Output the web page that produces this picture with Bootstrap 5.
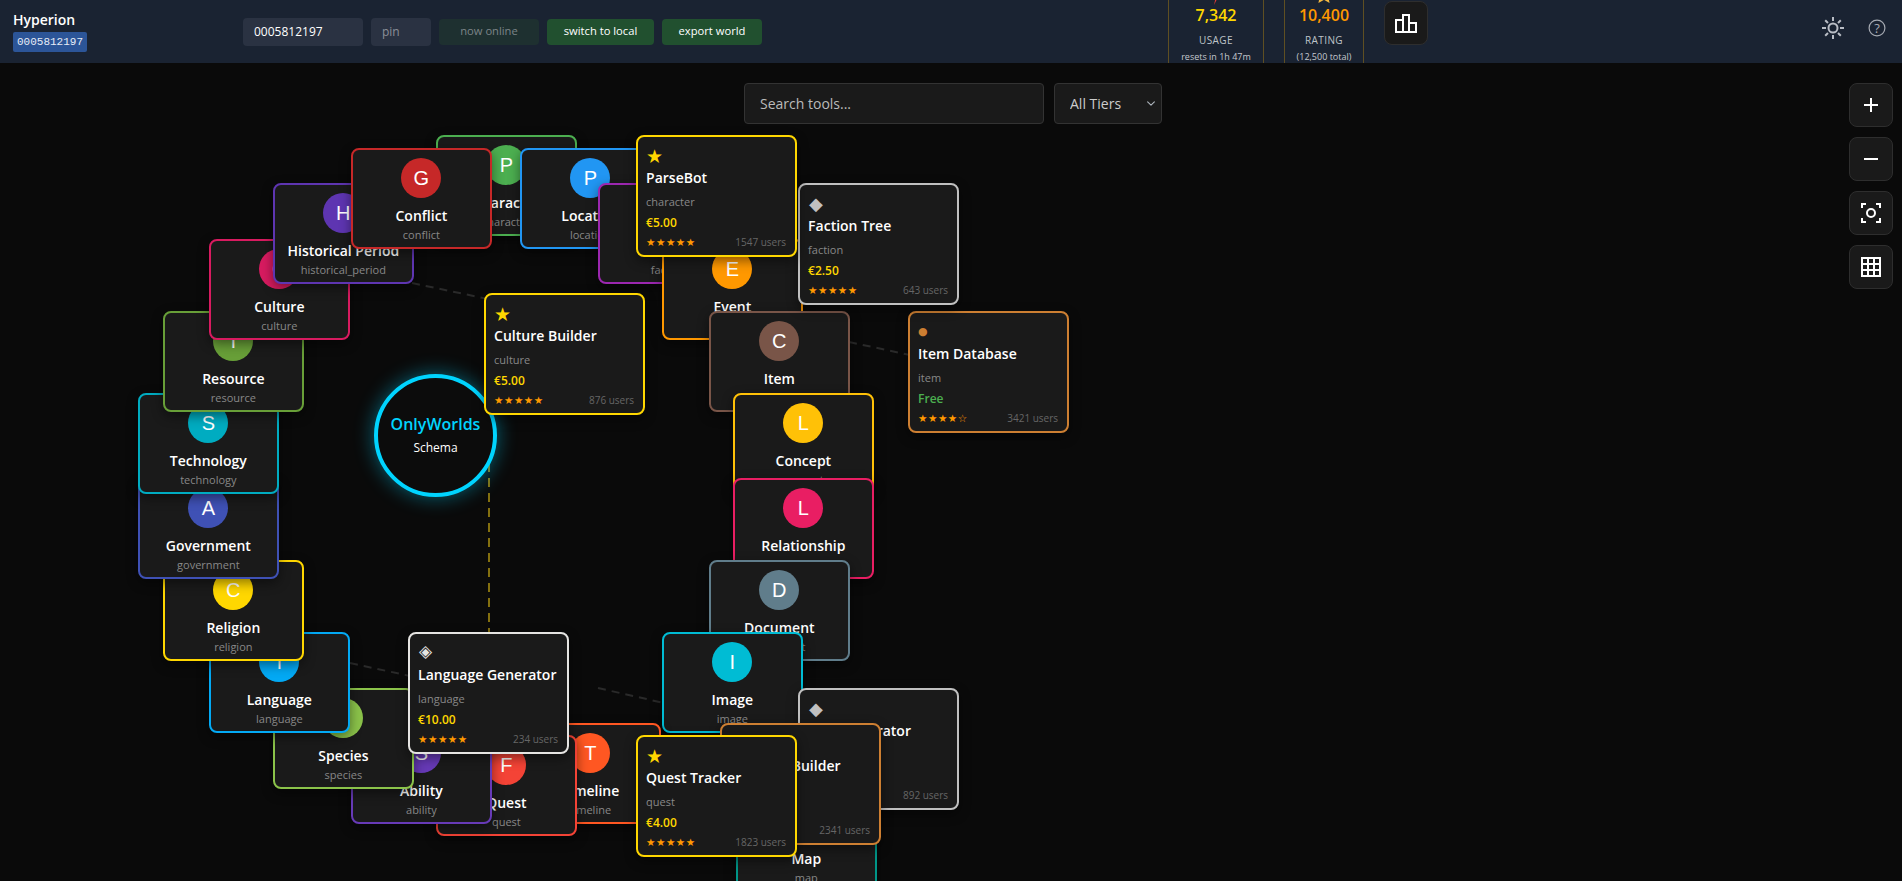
<!doctype html>
<html lang="en" data-bs-theme="dark">

<head>
	<meta charset="utf-8">
	<meta name="viewport" content="width=device-width, initial-scale=1">
	<title>Hyperion — OnlyWorlds tools</title>
	<link href="https://cdn.jsdelivr.net/npm/bootstrap@5.3.5/dist/css/bootstrap.min.css" rel="stylesheet"
		crossorigin="anonymous">
	<style>
		html, body { height: 100%; overflow: hidden; }
		body { background: #0a0a0a; color: #fff; font-family: "Open Sans", sans-serif; }

		.top-bar { height: 63px; background: #1a2332; overflow: hidden; }
		.brand-box { width: 243px; padding-left: 13px; }
		.brand-name { font-size: 14px; font-weight: 600; line-height: 19px; margin-top: -1px; }
		.world-tag { display: block; width: 74px; height: 20px; margin-top: 3px; padding: 0; background: #2c5598; border-radius: 2px; color: #e6ecf7; font: 11px/20px "Liberation Mono", monospace; text-align: center; }
		.bar-input { height: 28px; background: #2a3242; border: 0; border-radius: 4px; color: #fff; font-size: 12px; padding: 0 11px; }
		.bar-input::placeholder { color: #8a8f98; }
		.bar-btn { height: 26px; padding: 0; border: 0; border-radius: 4px; background: #21502f; color: #fff; font-size: 11.200px; font-weight: 500; width: 107px; }
		.bar-btn:disabled { width: 100px; background: #1e3030; color: #7c8488; font-weight: 400; opacity: 1; }
		.stat-row { margin-left: 406px; gap: 20px; }
		.stat-box { height: 97px; padding-top: 1px; border-left: 1px solid #5f4f22; border-right: 1px solid #5f4f22; text-align: center; overflow: hidden; }
		.stat-box.usage { width: 96px; }
		.stat-box.rating { width: 80px; }
		.stat-icon { height: 20px; line-height: 20px; margin-top: -1px; }
		.stat-value { font-size: 16px; font-weight: 600; line-height: 24px; }
		.stat-label { font-size: 10px; line-height: 15px; margin-top: 6px; color: #bfc3c9; letter-spacing: .4px; }
		.stat-sub { font-size: 9px; line-height: 15px; margin-top: 1px; color: #c4c8ce; }
		.square-btn { width: 44px; height: 44px; padding: 0; background: #1a1a1a; border: 1px solid #2e2e2e; border-radius: 8px; color: #fff; }
		.square-btn:hover { background: #262626; border-color: #444; }
		.chart-btn { margin-left: 20px; margin-top: -17px; }
		.bar-tools { margin-left: auto; margin-right: 16px; margin-top: -7px; gap: 24px; }

		.tool-canvas { height: 818px; }
		.links-layer { position: absolute; left: 0; top: 0; width: 100%; height: 100%; }
		.hub { position: absolute; left: 374px; top: 311px; width: 123px; height: 123px; background: #0c0c0c; border: 4px solid #00d4ff; border-radius: 50%; box-shadow: 0 0 20px rgba(0, 212, 255, .45); z-index: 1; padding-top: 35px; }
		.hub-title { color: #00d4ff; font-size: 16px; font-weight: 600; line-height: 22px; }
		.hub-sub { font-size: 12px; line-height: 16px; margin-top: 5px; }

		.cat-node { position: absolute; width: 141.500px; height: 101px; padding-top: 8px; background: #1a1a1a; border: 2px solid; border-radius: 8px; box-shadow: 0 4px 12px rgba(0, 0, 0, .45); z-index: 2; }
		.cat-dot { width: 40px; height: 40px; border-radius: 50%; color: #fff; font: 20px/40px "Liberation Sans", sans-serif; text-align: center; }
		.cat-name { font-size: 14px; font-weight: 600; line-height: 19px; margin-top: 8px; white-space: nowrap; }
		.cat-type { font-size: 11px; line-height: 15px; margin-top: 2px; color: #888; }

		.tool-node { position: absolute; width: 161.500px; height: 122px; padding: 8px 9px 8px 8.500px; background: #1a1a1a; border: 2px solid; border-radius: 8px; box-shadow: 0 4px 12px rgba(0, 0, 0, .45); z-index: 3; }
		.tool-tier { display: block; height: 22px; font-family: "DejaVu Sans", sans-serif; line-height: 22px; }
		.tool-tier.gold { font-size: 19px; color: #ffd700; }
		.tool-tier.silver { font-size: 18px; color: #c0c0c0; margin-left: 1px; }
		.tool-tier.bronze { font-size: 11px; color: #cd7f32; }
		.tool-tier.plat { font-size: 17px; color: #e5e4e2; line-height: 18px; margin-left: 1px; }
		.tool-name { font-size: 14px; font-weight: 600; line-height: 20px; margin-top: 1px; white-space: nowrap; }
		.tool-type { font-size: 11px; line-height: 16px; margin-top: 6px; color: #888; }
		.tool-price { font-size: 12px; font-weight: 600; line-height: 16px; margin-top: 5px; color: #ffd700; }
		.tool-price.free { color: #4caf50; }
		.tool-foot { line-height: 16px; margin-top: 3px; }
		.tool-stars { font: 10.500px/16px "DejaVu Sans", sans-serif; color: #ff9800; letter-spacing: .5px; }
		.tool-users { font-size: 10px; color: #666; margin-top: -1px; }

		.search-row { position: absolute; left: 744px; top: 20px; gap: 10px; z-index: 4; }
		.search-input { width: 300px; height: 41px; background: #1a1a1a; border: 1px solid #333; border-radius: 4px; font-size: 14px; color: #fff; padding: 0 15px; }
		.search-input::placeholder { color: #bbb; }
		.tier-select { width: 108px; height: 41px; background-color: #1a1a1a; background-position: right 4px center; background-size: 12px 9px; border: 1px solid #333; border-radius: 4px; font-size: 14px; color: #ccc; padding: 0 15px; }
		.zoom-stack { position: absolute; right: 9px; top: 20px; gap: 10px; z-index: 4; }
	</style>
</head>

<body>

	<header class="top-bar d-flex align-items-center">
		<div class="brand-box">
			<div class="brand-name">Hyperion</div>
			<span class="world-tag">0005812197</span>
		</div>
		<div class="d-flex align-items-center gap-2">
			<input class="bar-input" style="width:120px" type="text" value="0005812197" aria-label="world key">
			<input class="bar-input" style="width:60px" type="text" placeholder="pin" aria-label="pin">
			<button class="btn bar-btn" type="button" disabled>now online</button>
			<button class="btn bar-btn" type="button">switch to local</button>
			<button class="btn bar-btn" style="width:100px" type="button">export world</button>
		</div>
		<div class="stat-row d-flex align-items-center">
			<div class="stat-box usage">
				<div class="stat-icon"><svg width="14" height="20" viewBox="0 0 14 20"><path d="M8 0 3 11h4l-2 9 6-12H7l3-8z" fill="#e53935"/></svg></div>
				<div class="stat-value" style="color:#ffd700">7,342</div>
				<div class="stat-label">USAGE</div>
				<div class="stat-sub">resets in 1h 47m</div>
			</div>
			<div class="stat-box rating">
				<div class="stat-icon"><svg width="20" height="20" viewBox="0 0 24 24"><path d="M12 1l3.200 7 7.600.9-5.600 5.200 1.500 7.500L12 17.800l-6.700 3.800 1.500-7.500L1.200 8.900l7.600-.9z" fill="#f5b942"/></svg></div>
				<div class="stat-value" style="color:#ff9800">10,400</div>
				<div class="stat-label">RATING</div>
				<div class="stat-sub">(12,500 total)</div>
			</div>
		</div>
		<button class="btn square-btn chart-btn d-flex align-items-center justify-content-center" type="button" aria-label="stats">
			<svg width="22" height="19" viewBox="0 0 22 19" fill="none" stroke="#fff" stroke-width="2"><path d="M1 18V6h7v12zM8 18V1h6v17zM14 18V9h7v9z"/></svg>
		</button>
		<div class="bar-tools d-flex align-items-center">
			<svg width="22" height="22" viewBox="0 0 22 22" fill="none" stroke="#b9bdc5" stroke-width="2"><circle cx="11" cy="11" r="4.500"/><path d="M11 0v4M11 18v4M0 11h4M18 11h4M3.200 3.200 6 6M16 16l2.800 2.800M3.200 18.800 6 16M16 6l2.800-2.800"/></svg>
			<svg width="18" height="18" viewBox="0 0 18 18"><circle cx="9" cy="9" r="7.900" fill="none" stroke="#a6aab2" stroke-width="1.200"/><text x="9" y="13.500" text-anchor="middle" font-size="13" font-family="Open Sans" fill="#a6aab2">?</text></svg>
		</div>
	</header>

	<main class="tool-canvas position-relative">
		<svg class="links-layer" fill="none" stroke-width="2">
			<g stroke="#2a2a2a" stroke-dasharray="8 6">
				<path d="M412 220 L490 236.500"/>
				<path d="M849 279 L910 292"/>
				<path d="M350 600 L410 613"/>
				<path d="M598 625 L664 640"/>
			</g>
			<path d="M489 340 V570" stroke="#84700f" stroke-dasharray="9 6"/>
		</svg>

		<div class="hub text-center">
			<div class="hub-title">OnlyWorlds</div>
			<div class="hub-sub">Schema</div>
		</div>

		<div id="graph"></div>

		<div class="search-row d-flex">
			<input type="text" class="form-control search-input" placeholder="Search tools...">
			<select class="form-select tier-select" aria-label="tier">
				<option>All Tiers</option>
				<option>Gold</option>
				<option>Silver</option>
				<option>Bronze</option>
			</select>
		</div>

		<div class="zoom-stack d-flex flex-column">
			<button class="btn square-btn d-flex align-items-center justify-content-center" type="button" aria-label="zoom in">
				<svg width="16" height="16" viewBox="0 0 16 16" stroke="#fff" stroke-width="2"><path d="M8 1v14M1 8h14"/></svg>
			</button>
			<button class="btn square-btn d-flex align-items-center justify-content-center" type="button" aria-label="zoom out">
				<svg width="16" height="16" viewBox="0 0 16 16" stroke="#fff" stroke-width="2"><path d="M1 8h14"/></svg>
			</button>
			<button class="btn square-btn d-flex align-items-center justify-content-center" type="button" aria-label="recenter">
				<svg width="20" height="20" viewBox="0 0 20 20" fill="none" stroke="#fff" stroke-width="2"><circle cx="10" cy="10" r="4"/><path d="M1 5V1h4M15 1h4v4M19 15v4h-4M5 19H1v-4"/></svg>
			</button>
			<button class="btn square-btn d-flex align-items-center justify-content-center" type="button" aria-label="grid">
				<svg width="20" height="20" viewBox="0 0 20 20" fill="none" stroke="#fff" stroke-width="2"><path d="M1 1h18v18H1zM7 1v18M13 1v18M1 7h18M1 13h18"/></svg>
			</button>
		</div>
	</main>

	<script src="https://cdn.jsdelivr.net/npm/bootstrap@5.3.5/dist/js/bootstrap.bundle.min.js"
		crossorigin="anonymous"></script>
	<script>
		const barHeight = 63;

		// name, letter, colour, x, y (page coordinates of the top left corner)
		const categories = [
			['Character', 'P', '#4caf50', 436, 135],
			['Location', 'P', '#2196f3', 520, 148],
			['Faction', 'F', '#9c27b0', 598, 183],
			['Event', 'E', '#ff9800', 662, 239],
			['Item', 'C', '#795548', 709, 311],
			['Concept', 'L', '#ffc107', 733, 393],
			['Relationship', 'L', '#e91e63', 733, 478],
			['Document', 'D', '#607d8b', 709, 560],
			['Image', 'I', '#00bcd4', 662, 632],
			['Map', 'M', '#009688', 736, 791],
			['Timeline', 'T', '#ff5722', 520, 723],
			['Quest', 'F', '#f44336', 436, 735],
			['Ability', 'S', '#673ab7', 351, 723],
			['Species', 'S', '#8bc34a', 273, 688],
			['Language', 'T', '#03a9f4', 209, 632],
			['Religion', 'C', '#ffd700', 163, 560],
			['Government', 'A', '#3f51b5', 138, 478],
			['Technology', 'S', '#00acc1', 138, 393],
			['Resource', 'T', '#689f38', 163, 311],
			['Culture', 'C', '#d81b60', 209, 239],
			['Historical Period', 'H', '#5e35b1', 273, 183],
			['Conflict', 'G', '#c62828', 351, 148]
		];

		const tiers = {
			gold: ['★', '#ffd700'],
			silver: ['◆', '#c0c0c0'],
			bronze: ['●', '#cd7f32'],
			plat: ['◈', '#e5e4e2']
		};

		// name, type, tier, price, stars, users, x, y
		const tools = [
			['Item Database', 'item', 'bronze', 'Free', '★★★★☆', 3421, 908, 311],
			['Culture Builder', 'culture', 'gold', '€5.00', '★★★★★', 876, 484, 293],
			['Faction Tree', 'faction', 'silver', '€2.50', '★★★★★', 643, 798, 183],
			['ParseBot', 'character', 'gold', '€5.00', '★★★★★', 1547, 636, 135],
			['Map Generator', 'map', 'silver', '€3.00', '★★★★★', 892, 798, 688],
			['Timeline Builder', 'timeline', 'bronze', 'Free', '★★★★★', 2341, 720, 723],
			['Language Generator', 'language', 'plat', '€10.00', '★★★★★', 234, 408, 632],
			['Quest Tracker', 'quest', 'gold', '€4.00', '★★★★★', 1823, 636, 735]
		];

		const graph = document.getElementById('graph');

		categories.forEach(([name, letter, colour, x, y]) => {
			const el = document.createElement('div');
			el.className = 'cat-node d-flex flex-column align-items-center';
			el.style.cssText = `left:${x - 0.4}px;top:${y - barHeight}px;border-color:${colour}`;
			el.innerHTML = `<div class="cat-dot" style="background:${colour}">${letter}</div>
				<div class="cat-name">${name}</div>
				<div class="cat-type">${name.toLowerCase().replace(' ', '_')}</div>`;
			graph.appendChild(el);
		});

		tools.forEach(([name, type, tier, price, stars, users, x, y]) => {
			const el = document.createElement('div');
			el.className = 'tool-node';
			el.style.cssText = `left:${x - 0.4}px;top:${y - barHeight}px;border-color:${tiers[tier][1]}`;
			el.innerHTML = `<span class="tool-tier ${tier}">${tiers[tier][0]}</span>
				<div class="tool-name">${name}</div>
				<div class="tool-type">${type}</div>
				<div class="tool-price${price === 'Free' ? ' free' : ''}">${price}</div>
				<div class="tool-foot d-flex justify-content-between align-items-center">
					<span class="tool-stars">${stars}</span>
					<span class="tool-users">${users} users</span>
				</div>`;
			graph.appendChild(el);
		});
	</script>
</body>

</html>
